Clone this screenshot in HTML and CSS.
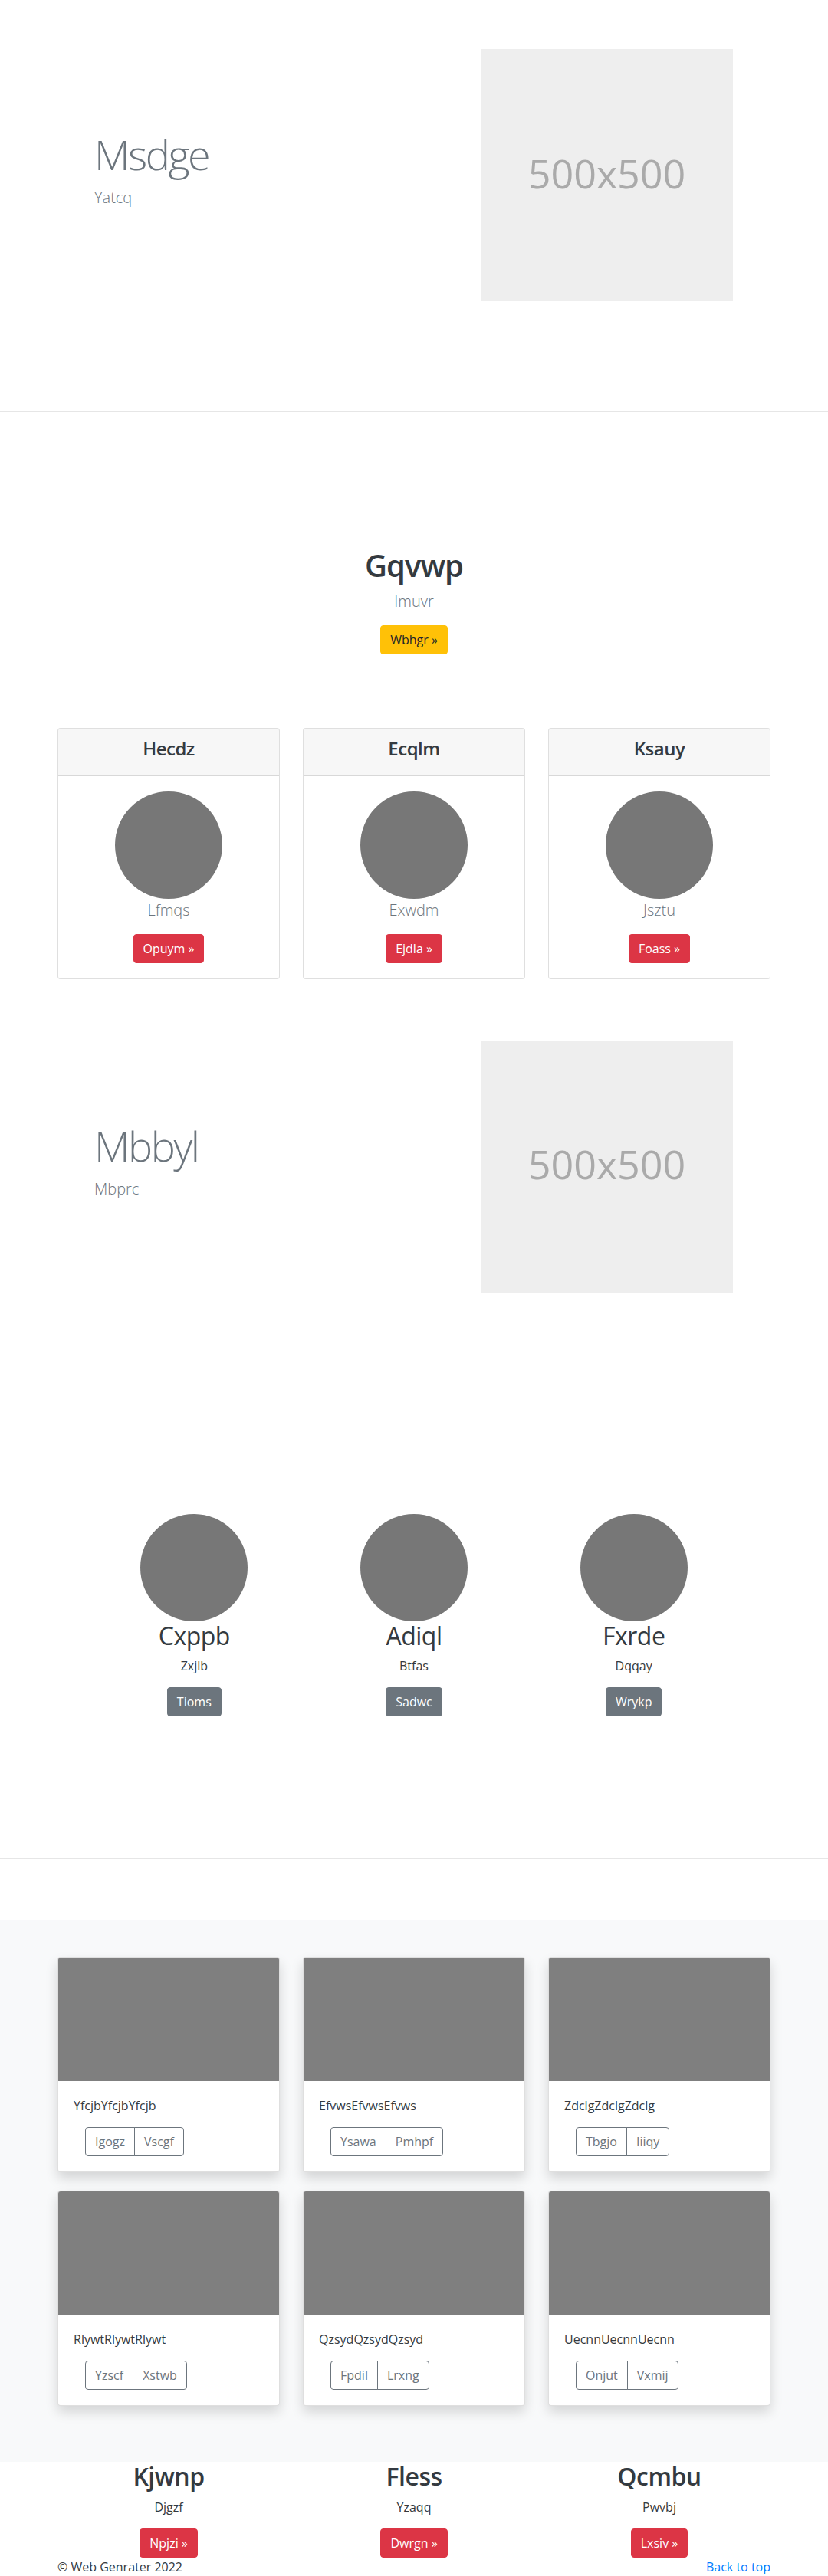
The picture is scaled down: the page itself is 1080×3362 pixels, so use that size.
FILE: index.html
```html
<!DOCTYPE html>
<html lang="en">
<head>
<meta charset="utf-8">
<title>Web Genrater</title>
<link rel="stylesheet" href="styles.css">
</head>
<body>
<section class="hero hero-first">
  <div class="container hero-row">
    <div class="hero-text">
      <h1 class="display">Msdge</h1>
      <p class="lead muted">Yatcq</p>
    </div>
    <div class="hero-media">
      <div class="placeholder">500x500</div>
    </div>
  </div>
</section>

<section class="pricing">
  <div class="pricing-header">
    <h1 class="pricing-title">Gqvwp</h1>
    <p class="lead muted">Imuvr</p>
    <a class="btn btn-warning" href="#">Wbhgr »</a>
  </div>
  <div class="container card-grid">
    <div class="card">
      <div class="card-header"><h4 class="card-title">Hecdz</h4></div>
      <div class="card-body">
        <div class="circle"></div>
        <p class="lead muted">Lfmqs</p>
        <a class="btn btn-danger" href="#">Opuym »</a>
      </div>
    </div>
    <div class="card">
      <div class="card-header"><h4 class="card-title">Ecqlm</h4></div>
      <div class="card-body">
        <div class="circle"></div>
        <p class="lead muted">Exwdm</p>
        <a class="btn btn-danger" href="#">Ejdla »</a>
      </div>
    </div>
    <div class="card">
      <div class="card-header"><h4 class="card-title">Ksauy</h4></div>
      <div class="card-body">
        <div class="circle"></div>
        <p class="lead muted">Jsztu</p>
        <a class="btn btn-danger" href="#">Foass »</a>
      </div>
    </div>
  </div>
</section>

<section class="hero hero-second">
  <div class="container hero-row">
    <div class="hero-text">
      <h1 class="display">Mbbyl</h1>
      <p class="lead muted">Mbprc</p>
    </div>
    <div class="hero-media">
      <div class="placeholder">500x500</div>
    </div>
  </div>
</section>

<section class="marketing">
  <div class="marketing-row">
    <div class="member">
      <div class="circle"></div>
      <h2 class="member-name">Cxppb</h2>
      <p class="member-text">Zxjlb</p>
      <a class="btn btn-secondary" href="#">Tioms</a>
    </div>
    <div class="member">
      <div class="circle"></div>
      <h2 class="member-name">Adiql</h2>
      <p class="member-text">Btfas</p>
      <a class="btn btn-secondary" href="#">Sadwc</a>
    </div>
    <div class="member">
      <div class="circle"></div>
      <h2 class="member-name">Fxrde</h2>
      <p class="member-text">Dqqay</p>
      <a class="btn btn-secondary" href="#">Wrykp</a>
    </div>
  </div>
</section>

<section class="album">
  <div class="container album-grid">
    <div class="album-card">
      <div class="album-img"></div>
      <div class="album-body">
        <p class="album-text">YfcjbYfcjbYfcjb</p>
        <div class="btn-group"><a class="btn btn-outline" href="#">Igogz</a><a class="btn btn-outline" href="#">Vscgf</a></div>
      </div>
    </div>
    <div class="album-card">
      <div class="album-img"></div>
      <div class="album-body">
        <p class="album-text">EfvwsEfvwsEfvws</p>
        <div class="btn-group"><a class="btn btn-outline" href="#">Ysawa</a><a class="btn btn-outline" href="#">Pmhpf</a></div>
      </div>
    </div>
    <div class="album-card">
      <div class="album-img"></div>
      <div class="album-body">
        <p class="album-text">ZdclgZdclgZdclg</p>
        <div class="btn-group"><a class="btn btn-outline" href="#">Tbgjo</a><a class="btn btn-outline" href="#">Iiiqy</a></div>
      </div>
    </div>
    <div class="album-card">
      <div class="album-img"></div>
      <div class="album-body">
        <p class="album-text">RlywtRlywtRlywt</p>
        <div class="btn-group"><a class="btn btn-outline" href="#">Yzscf</a><a class="btn btn-outline" href="#">Xstwb</a></div>
      </div>
    </div>
    <div class="album-card">
      <div class="album-img"></div>
      <div class="album-body">
        <p class="album-text">QzsydQzsydQzsyd</p>
        <div class="btn-group"><a class="btn btn-outline" href="#">Fpdil</a><a class="btn btn-outline" href="#">Lrxng</a></div>
      </div>
    </div>
    <div class="album-card">
      <div class="album-img"></div>
      <div class="album-body">
        <p class="album-text">UecnnUecnnUecnn</p>
        <div class="btn-group"><a class="btn btn-outline" href="#">Onjut</a><a class="btn btn-outline" href="#">Vxmij</a></div>
      </div>
    </div>
  </div>
</section>

<section class="features">
  <div class="features-row">
    <div class="feature">
      <h2 class="feature-title">Kjwnp</h2>
      <p class="feature-text">Djgzf</p>
      <a class="btn btn-danger" href="#">Npjzi »</a>
    </div>
    <div class="feature">
      <h2 class="feature-title">Fless</h2>
      <p class="feature-text">Yzaqq</p>
      <a class="btn btn-danger" href="#">Dwrgn »</a>
    </div>
    <div class="feature">
      <h2 class="feature-title">Qcmbu</h2>
      <p class="feature-text">Pwvbj</p>
      <a class="btn btn-danger" href="#">Lxsiv »</a>
    </div>
  </div>
</section>

<footer class="footer">
  <p class="copyright">© Web Genrater 2022</p>
  <a class="back-top" href="#">Back to top</a>
</footer>
</body>
</html>
```

FILE: styles.css
```css
* { box-sizing: border-box; }

body {
  margin: 0;
  font-family: "Open Sans", "Noto Sans", sans-serif;
  font-size: 16px;
  line-height: 1.5;
  color: #212529;
  background: #fff;
}

h1, h2, h4, p { margin: 0; }

.container {
  width: 960px;
  margin: 0 auto;
  padding: 0 15px;
}

.muted { color: #6c757d; }

.lead {
  font-size: 20px;
  font-weight: 300;
  line-height: 30px;
  margin-bottom: 16px;
}

/* buttons */
.btn {
  display: inline-block;
  padding: 6px 12px;
  font-size: 16px;
  line-height: 24px;
  border: 1px solid transparent;
  border-radius: 4px;
  text-decoration: none;
  text-align: center;
  vertical-align: middle;
}
.btn-warning { background: #ffc107; border-color: #ffc107; color: #212529; }
.btn-danger { background: #dc3545; border-color: #dc3545; color: #fff; }
.btn-secondary { background: #6c757d; border-color: #6c757d; color: #fff; }
.btn-outline { background: transparent; border-color: #6c757d; color: #6c757d; }

.btn-group { display: inline-flex; margin-left: 15px; }
.btn-group .btn:first-child { border-top-right-radius: 0; border-bottom-right-radius: 0; }
.btn-group .btn:last-child { margin-left: -1px; border-top-left-radius: 0; border-bottom-left-radius: 0; }

/* hero */
.hero { border-bottom: 1px solid #e6e6e6; }
.hero-first { padding: 64px 0 144px; }
.hero-second { padding: 64px 0 141px; }

.hero-row {
  display: flex;
  align-items: center;
  padding: 0;
}
.hero-text {
  width: 480px;
  padding-left: 63px;
}
.hero-media {
  width: 480px;
  padding-left: 87px;
}
.display {
  font-size: 54px;
  font-weight: 300;
  line-height: 1.24;
  color: #6c757d;
  margin-bottom: 8px;
  letter-spacing: -2.5px;
}
.placeholder {
  width: 329px;
  height: 329px;
  background: #eeeeee;
  color: #aaaaaa;
  font-size: 52px;
  display: flex;
  align-items: center;
  justify-content: center;
  padding-bottom: 6px;
}

/* pricing */
.pricing { padding: 176px 0 16px; }
.pricing-header { text-align: center; }
.pricing-title {
  font-size: 40px;
  font-weight: 600;
  line-height: 48px;
  margin-bottom: 8px;
  color: #343a40;
  letter-spacing: -1px;
}
.card-grid {
  margin-top: 96px;
  display: grid;
  grid-template-columns: repeat(3, 290px);
  column-gap: 30px;
}
.card {
  border: 1px solid rgba(0, 0, 0, 0.125);
  border-radius: 4px;
  background: #fff;
  text-align: center;
}
.card-header {
  background: rgba(0, 0, 0, 0.03);
  border-bottom: 1px solid rgba(0, 0, 0, 0.125);
  padding: 12px 20px;
}
.card-title {
  font-size: 24px;
  font-weight: 600;
  line-height: 28.8px;
  margin-bottom: 8px;
  color: #343a40;
  letter-spacing: -0.5px;
}
.card-body { padding: 20px; }
.circle {
  width: 140px;
  height: 140px;
  border-radius: 50%;
  background: #777;
  margin: 0 auto;
}

/* marketing */
.marketing {
  padding: 147px 0 185px;
  border-bottom: 1px solid #e6e6e6;
}
.marketing-row {
  width: 860px;
  margin: 0 auto;
  display: grid;
  grid-template-columns: repeat(3, 1fr);
}
.member { text-align: center; }
.member-name {
  font-size: 32px;
  font-weight: 400;
  line-height: 38.4px;
  margin-bottom: 8px;
  color: #343a40;
  letter-spacing: -0.5px;
}
.member-text { margin-bottom: 16px; color: #343a40; }

/* album */
.album {
  margin-top: 80px;
  background: #f8f9fa;
  padding: 48px 0 73px;
}
.album-grid {
  display: grid;
  grid-template-columns: repeat(3, 290px);
  column-gap: 30px;
  row-gap: 24px;
}
.album-card {
  background: #fff;
  border: 1px solid rgba(0, 0, 0, 0.125);
  border-radius: 4px;
  overflow: hidden;
  box-shadow: 0 8px 16px rgba(0, 0, 0, 0.15);
}
.album-img {
  height: 161px;
  background: #7f7f7f;
}
.album-body { padding: 20px; }
.album-text { margin-bottom: 16px; color: #343a40; }

/* features */
.features-row {
  width: 960px;
  margin: 0 auto;
  display: grid;
  grid-template-columns: repeat(3, 1fr);
}
.feature { text-align: center; }
.feature-title {
  font-size: 32px;
  font-weight: 600;
  line-height: 38.4px;
  margin-bottom: 8px;
  color: #343a40;
  letter-spacing: -0.5px;
}
.feature-text { margin-bottom: 16px; color: #343a40; }

/* footer */
.footer {
  width: 960px;
  margin: 0 auto;
  padding: 0 15px;
  display: flex;
  justify-content: space-between;
  align-items: flex-start;
}
.copyright { color: #343a40; }
.back-top { color: #007bff; text-decoration: none; }
```
